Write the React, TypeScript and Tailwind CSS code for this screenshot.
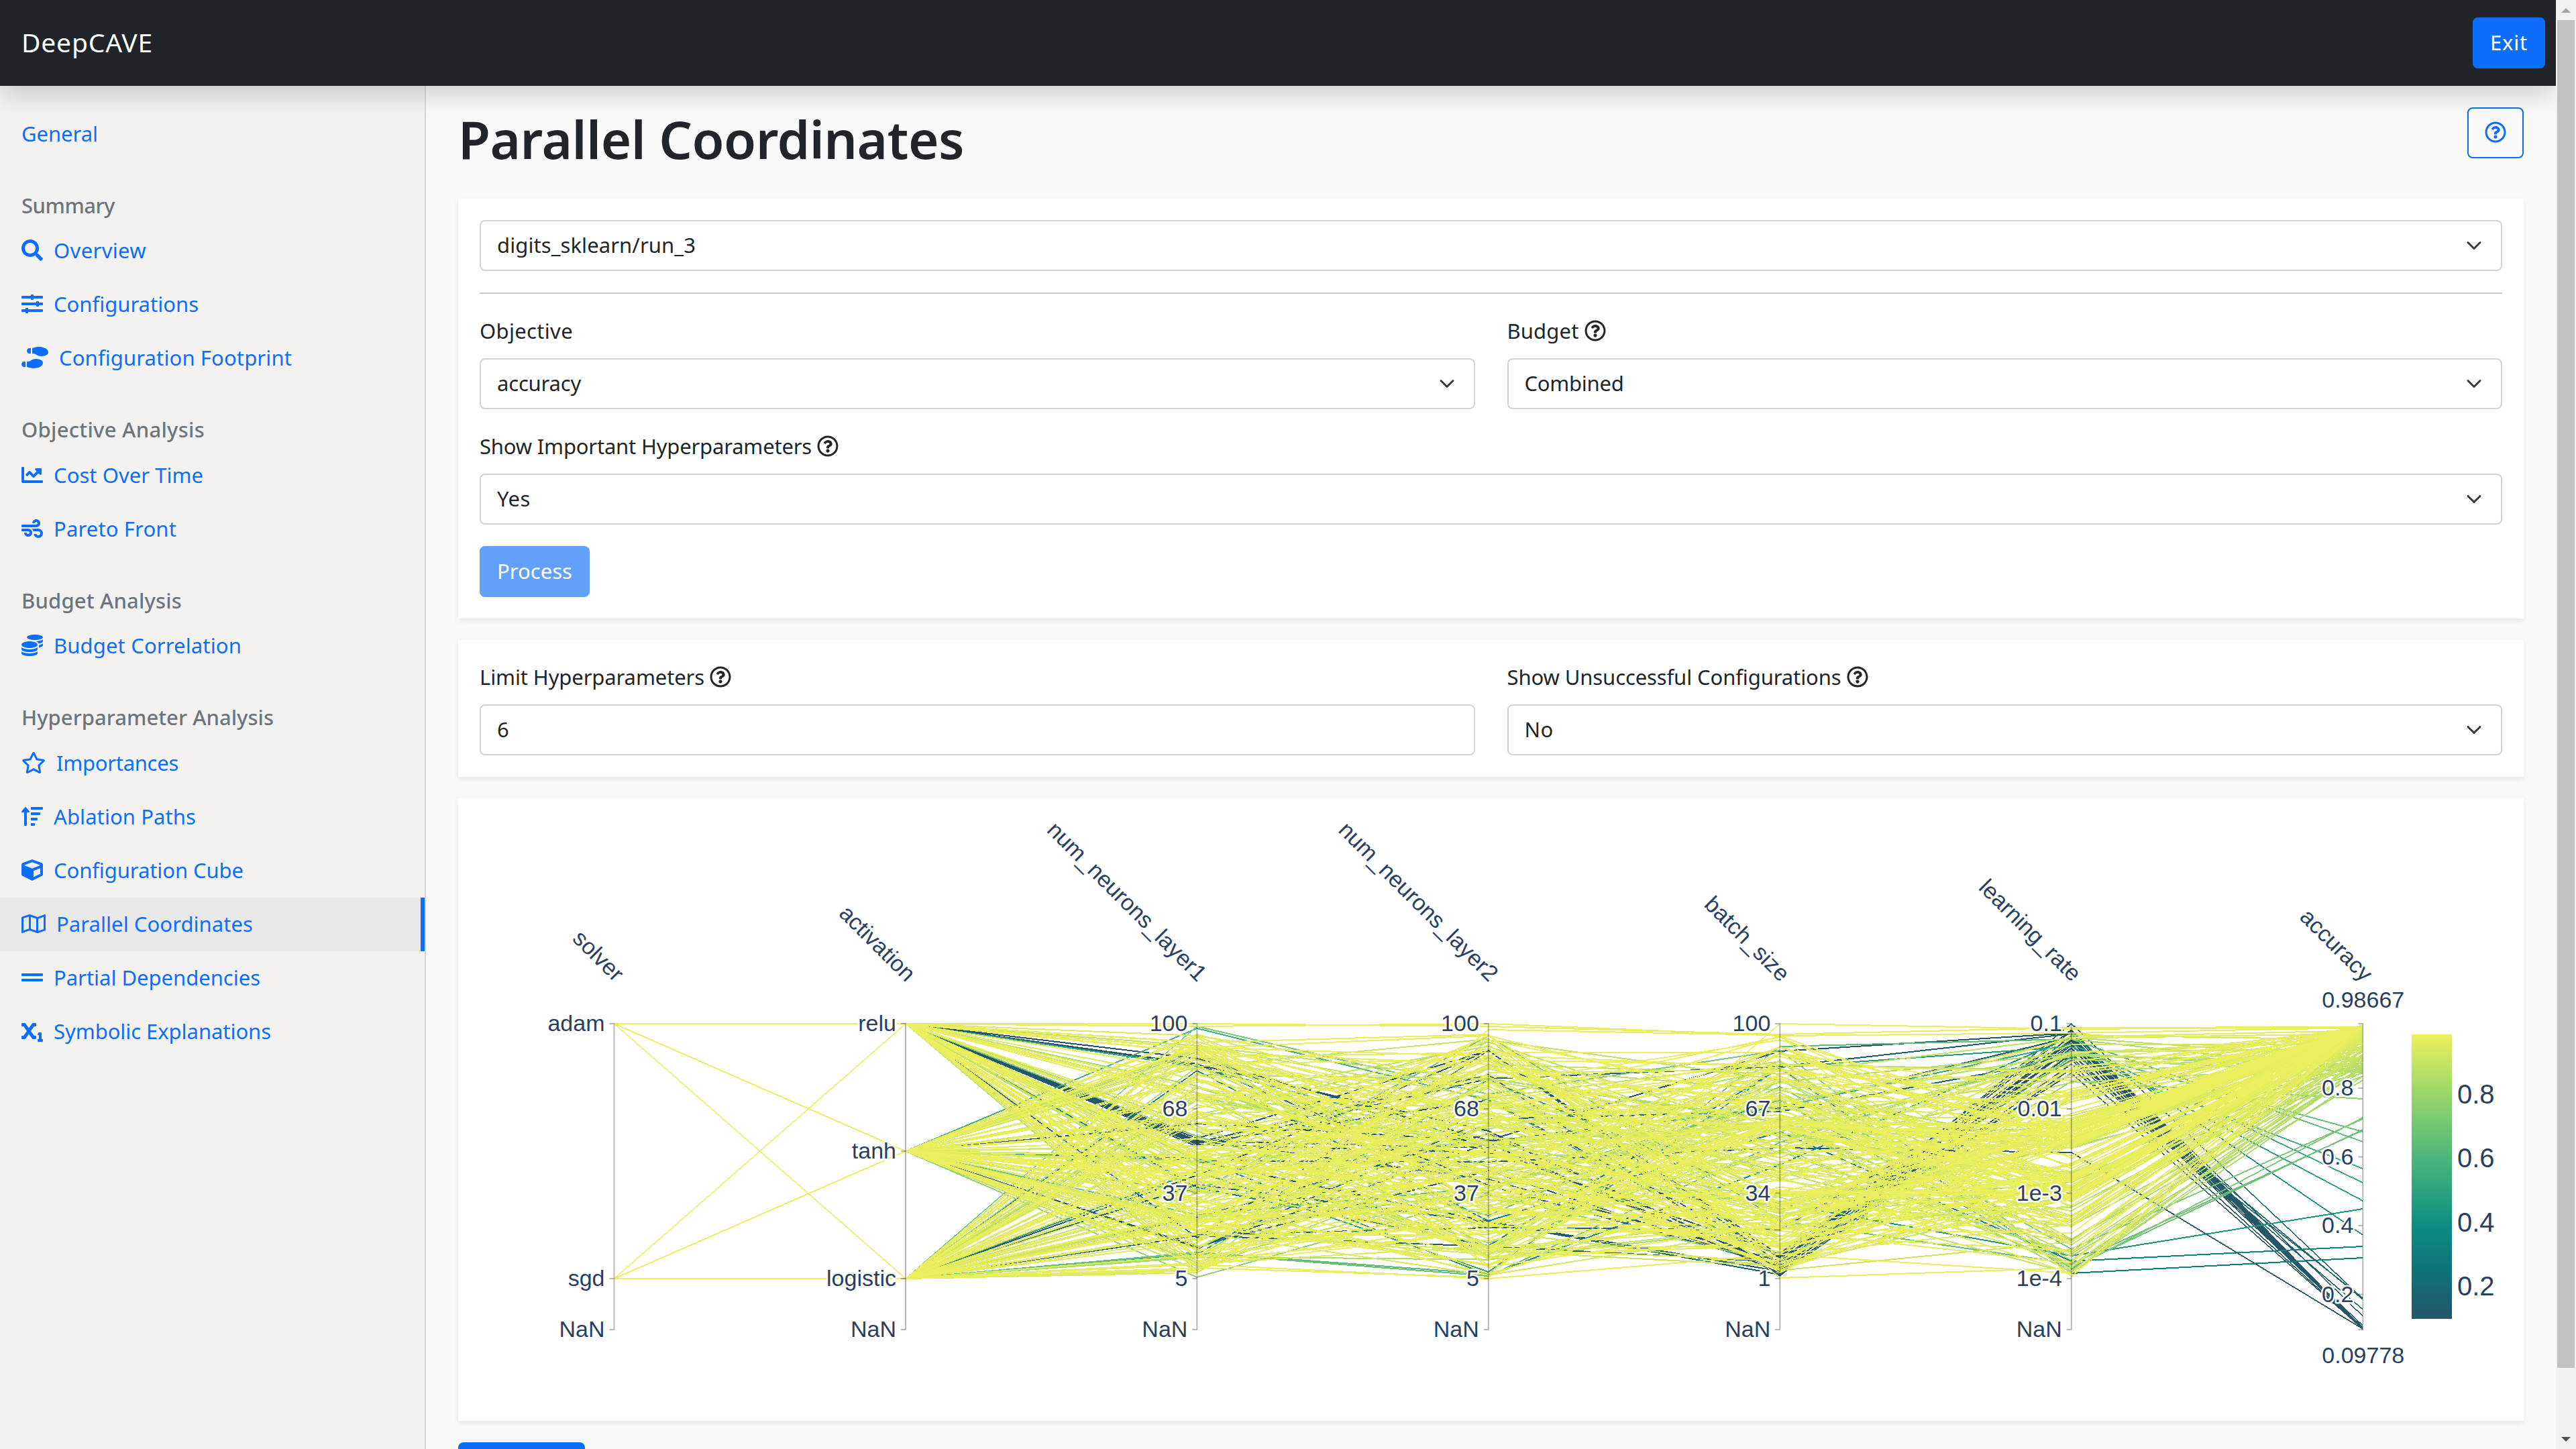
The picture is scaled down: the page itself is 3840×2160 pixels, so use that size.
import { useLayoutEffect, useRef } from "react";
import type { ReactNode } from "react";
import type { IconType } from "react-icons";
import {
  FaChartLine,
  FaCoins,
  FaCube,
  FaGripLines,
  FaRegMap,
  FaRegQuestionCircle,
  FaRegStar,
  FaSearch,
  FaShoePrints,
  FaSlidersH,
  FaSortAmountUp,
  FaSubscript,
  FaWind,
} from "react-icons/fa";

/** Single-line text whose tracking is tuned so that it occupies a given width. */
function FitText({ children, width, className = "" }: { children: string; width: number; className?: string }) {
  const ref = useRef<HTMLSpanElement>(null);
  useLayoutEffect(() => {
    const el = ref.current;
    if (!el) return;
    el.style.letterSpacing = "0px";
    const natural = el.getBoundingClientRect().width;
    el.style.letterSpacing = `${(width - natural) / children.length}px`;
  }, [children, width]);
  return (
    <span ref={ref} className={`inline-block -translate-y-px whitespace-nowrap ${className}`}>
      {children}
    </span>
  );
}

/* ---------- sidebar ---------- */

type NavItem = { label: string; width: number; icon?: IconType; wide?: string; active?: boolean };
type NavGroup = { title?: string; width?: number; items: NavItem[] };

const NAV: NavGroup[] = [
  { items: [{ label: "General", width: 114 }] },
  {
    title: "Summary",
    width: 139,
    items: [
      { label: "Overview", width: 138, icon: FaSearch },
      { label: "Configurations", width: 216, icon: FaSlidersH },
      { label: "Configuration Footprint", width: 347, icon: FaShoePrints, wide: "w-10" },
    ],
  },
  {
    title: "Objective Analysis",
    width: 273,
    items: [
      { label: "Cost Over Time", width: 223, icon: FaChartLine },
      { label: "Pareto Front", width: 183, icon: FaWind },
    ],
  },
  {
    title: "Budget Analysis",
    width: 239,
    items: [{ label: "Budget Correlation", width: 280, icon: FaCoins }],
  },
  {
    title: "Hyperparameter Analysis",
    width: 376,
    items: [
      { label: "Importances", width: 182, icon: FaRegStar, wide: "w-9" },
      { label: "Ablation Paths", width: 212, icon: FaSortAmountUp },
      { label: "Configuration Cube", width: 283, icon: FaCube },
      { label: "Parallel Coordinates", width: 293, icon: FaRegMap, wide: "w-9", active: true },
      { label: "Partial Dependencies", width: 308, icon: FaGripLines },
      { label: "Symbolic Explanations", width: 324, icon: FaSubscript },
    ],
  },
];

function Sidebar() {
  return (
    <aside className="w-[635px] shrink-0 border-r-2 border-[#d9d8d7] bg-[#f3f2f0] pt-8">
      {NAV.map((group) => (
        <div key={group.items[0].label}>
          {group.title && (
            <h6 className="mt-12 mb-2 h-[38.4px] px-8 leading-[38.4px] font-medium text-[#6c757d]">
              <FitText width={group.width ?? 0}>{group.title}</FitText>
            </h6>
          )}
          {group.items.map(({ label, width, icon: Icon, wide, active }) => (
            <a
              key={label}
              className={`flex h-20 items-center gap-4 pl-8 leading-[48px] text-[#0d6efd] ${
                active ? "border-r-[6px] border-[#0d6efd] bg-[#e8e8e8]" : ""
              }`}
            >
              {Icon && <Icon className={`h-8 shrink-0 -translate-y-px ${wide ?? "w-8"}`} />}
              <FitText width={width}>{label}</FitText>
            </a>
          ))}
        </div>
      ))}
    </aside>
  );
}

/* ---------- form parts ---------- */

function Card({ children, className = "" }: { children: ReactNode; className?: string }) {
  return <section className={`bg-white shadow-[0_4px_8px_rgba(0,0,0,0.075)] ${className}`}>{children}</section>;
}

function Control({ value, width, select = true }: { value: string; width: number; select?: boolean }) {
  return (
    <div className="flex h-[76px] items-center justify-between rounded-lg border-2 border-[#ced4da] bg-white pr-7 pl-6 leading-[48px]">
      <FitText width={width}>{value}</FitText>
      {select && (
        <svg className="size-6" viewBox="0 0 16 16" fill="none" stroke="#343a40" strokeWidth="2" strokeLinecap="round" strokeLinejoin="round">
          <path d="m2 5 6 6 6-6" />
        </svg>
      )}
    </div>
  );
}

function Label({ text, width, help = true }: { text: string; width: number; help?: boolean }) {
  return (
    <div className="mb-4 flex h-12 items-center gap-2 leading-[48px]">
      <FitText width={width}>{text}</FitText>
      {help && <FaRegQuestionCircle className="size-8 -translate-y-px" />}
    </div>
  );
}

/* ---------- parallel coordinates plot ---------- */

const AXES = [915.5, 1350, 1784.4, 2218.8, 2653.3, 3087.8, 3522.3];
const TOP = 1526;
const BOTTOM = 1906;
const NAN_Y = 1982;
const RELU = 1526;
const TANH = 1716;
const LOGISTIC = 1906;

const STOPS: [number, number, number][] = [
  [36, 86, 104],
  [15, 114, 121],
  [13, 143, 129],
  [57, 171, 126],
  [110, 197, 116],
  [169, 220, 103],
  [237, 239, 93],
];

function colorAt(accY: number): string {
  const t = Math.min(1, Math.max(0, (NAN_Y - accY) / (NAN_Y - TOP)));
  const p = t * (STOPS.length - 1);
  const i = Math.min(STOPS.length - 2, Math.floor(p));
  const f = p - i;
  const c = STOPS[i].map((v, k) => Math.round(v + (STOPS[i + 1][k] - v) * f));
  return `rgb(${c[0]},${c[1]},${c[2]})`;
}

// Runs with low accuracy: activation, layer1, layer2, batch size, learning rate, accuracy
const LOW_RUNS: number[][] = [
  [RELU, 1578, 1700, 1567, 1540, 1981],
  [RELU, 1586, 1767, 1887, 1544, 1981],
  [RELU, 1587, 1686, 1893, 1548, 1980],
  [RELU, 1697, 1566, 1872, 1535, 1981],
  [RELU, 1700, 1758, 1880, 1552, 1981],
  [RELU, 1703, 1602, 1902, 1558, 1979],
  [RELU, 1706, 1718, 1868, 1563, 1981],
  [RELU, 1709, 1608, 1590, 1541, 1962],
  [RELU, 1845, 1566, 1884, 1526, 1936],
  [TANH, 1675, 1701, 1651, 1546, 1981],
  [TANH, 1730, 1732, 1711, 1718, 1981],
  [TANH, 1731, 1821, 1895, 1571, 1980],
  [TANH, 1860, 1704, 1898, 1586, 1981],
  [TANH, 1862, 1668, 1657, 1577, 1937],
  [LOGISTIC, 1841, 1830, 1833, 1580, 1952],
  [LOGISTIC, 1842, 1858, 1881, 1537, 1981],
  [LOGISTIC, 1752, 1566, 1876, 1600, 1981],
  [LOGISTIC, 1815, 1690, 1890, 1570, 1976],
  [LOGISTIC, 1766, 1822, 1900, 1593, 1935],
  [RELU, 1704, 1640, 1874, 1556, 1981],
  [RELU, 1701, 1711, 1886, 1550, 1981],
  [TANH, 1858, 1745, 1891, 1562, 1981],
  [RELU, 1770, 1857, 1592, 1898, 1875],
  [LOGISTIC, 1596, 1820, 1687, 1880, 1858],
  [LOGISTIC, 1870, 1610, 1794, 1872, 1802],
  [TANH, 1726, 1901, 1736, 1545, 1841],
  [LOGISTIC, 1746, 1896, 1591, 1560, 1790],
  [RELU, 1590, 1704, 1650, 1556, 1763],
  [TANH, 1533, 1640, 1884, 1575, 1742],
  [LOGISTIC, 1867, 1899, 1560, 1549, 1702],
  [LOGISTIC, 1868, 1902, 1703, 1567, 1687],
  [TANH, 1811, 1770, 1640, 1890, 1684],
  [TANH, 1777, 1544, 1820, 1884, 1685],
  [LOGISTIC, 1530, 1631, 1566, 1892, 1666],
  [RELU, 1694, 1812, 1620, 1862, 1668],
  [TANH, 1904, 1781, 1883, 1612, 1638],
];

function makeRuns(): number[][] {
  let seed = 20240;
  const rnd = () => {
    seed = (seed * 1664525 + 1013904223) % 4294967296;
    return seed / 4294967296;
  };
  const runs: number[][] = LOW_RUNS.map((r, i) => [i % 2 ? BOTTOM : TOP, ...r]);
  const acts = [RELU, TANH, LOGISTIC];
  for (let i = 0; i < 215; i++) {
    const act = acts[i % 3];
    let l1 = TOP + 14 + rnd() * (BOTTOM - TOP - 22);
    // Keeps the gaps of the relu fan open around the failed runs.
    while (act === RELU && ((l1 > 1688 && l1 < 1716) || (l1 > 1572 && l1 < 1594) || (l1 > 1838 && l1 < 1850))) {
      l1 = TOP + 14 + rnd() * (BOTTOM - TOP - 22);
    }
    const l2 = TOP + 16 + rnd() * (BOTTOM - TOP - 20);
    const batch = TOP + 18 + rnd() * (BOTTOM - TOP - 26);
    const pick = rnd();
    let lr: number;
    if (pick < 0.2) lr = 1670 + rnd() * 42;
    else if (pick < 0.36) lr = 1756 + rnd() * 34;
    else if (pick < 0.45) lr = 1540 + rnd() * 60;
    else lr = 1592 + rnd() * 310;
    let acc = 1528 + Math.pow(rnd(), 1.8) * 26;
    if (lr < 1600 || lr > 1840) acc = 1531 + Math.pow(rnd(), 1.5) * 80;
    else if (rnd() < 0.15) acc = 1545 + rnd() * 72;
    runs.push([i % 2 ? TOP : BOTTOM, act, l1, l2, batch, lr, acc]);
  }
  runs.push([TOP, RELU, 1526, 1530, 1542, 1532, 1531]);
  runs.push([TOP, RELU, 1530, 1526, 1544, 1540, 1532]);
  runs.push([BOTTOM, LOGISTIC, 1890, 1904, 1526, 1534, 1531]);
  runs.push([BOTTOM, LOGISTIC, 1885, 1535, 1543, 1903, 1532]);
  runs.push([TOP, LOGISTIC, 1576, 1569, 1569, 1700, 1531]);
  runs.push([BOTTOM, RELU, 1554, 1542, 1905, 1890, 1531]);
  runs.push([BOTTOM, TANH, 1885, 1906, 1870, 1898, 1532]);
  return runs.sort((a, b) => b[6] - a[6]);
}

const RUNS = makeRuns();

/** One run as a ribbon of constant vertical thickness, so steep parts come out thinner. */
function ribbon(run: number[]): string {
  const half = 1;
  const upper = run.map((y, k) => `${AXES[k]} ${(y - half).toFixed(1)}`);
  const lower = run.map((y, k) => `${AXES[k]} ${(y + half).toFixed(1)}`).reverse();
  return `M${upper.join("L")}L${lower.join("L")}Z`;
}

const TITLES = ["solver", "activation", "num_neurons_layer1", "num_neurons_layer2", "batch_size", "learning_rate", "accuracy"];

const NUM_Y = [1526, 1653, 1778.5, 1906];
const TICKS: [string, number][][] = [
  [["adam", TOP], ["sgd", BOTTOM]],
  [["relu", RELU], ["tanh", TANH], ["logistic", LOGISTIC]],
  [["100", NUM_Y[0]], ["68", NUM_Y[1]], ["37", NUM_Y[2]], ["5", NUM_Y[3]]],
  [["100", NUM_Y[0]], ["68", NUM_Y[1]], ["37", NUM_Y[2]], ["5", NUM_Y[3]]],
  [["100", NUM_Y[0]], ["67", NUM_Y[1]], ["34", NUM_Y[2]], ["1", NUM_Y[3]]],
  [["0.1", NUM_Y[0]], ["0.01", NUM_Y[1]], ["1e-3", NUM_Y[2]], ["1e-4", NUM_Y[3]]],
  [["0.8", 1622], ["0.6", 1724.5], ["0.4", 1827], ["0.2", 1929.5]],
];

function ParallelPlot() {
  return (
    <svg className="block h-[928px] w-[3079px] font-['Liberation_Sans',Arial,sans-serif] text-[34px]" viewBox="683 1190 3079 928" fill="#2a3f5f">
      <defs>
        <linearGradient id="scale" x1="0" y1="1" x2="0" y2="0">
          {STOPS.map((c, i) => (
            <stop key={i} offset={i / 6} stopColor={`rgb(${c[0]},${c[1]},${c[2]})`} />
          ))}
        </linearGradient>
      </defs>

      <g shapeRendering="crispEdges">
        {RUNS.map((run, i) => (
          <path key={i} fill={colorAt(run[6])} d={ribbon(run)} />
        ))}
      </g>

      {AXES.map((x, i) => {
        const ticks = i < 6 ? [...TICKS[i], ["NaN", NAN_Y] as [string, number]] : TICKS[i];
        return (
          <g key={x}>
            <path d={`M${x - 7} ${TOP}H${x}V${NAN_Y}H${x - 7}`} fill="none" stroke="#000" strokeOpacity="0.28" strokeWidth="2" />
            {ticks.map(([text, y]) => (
              <g key={text}>
                {y !== TOP && y !== NAN_Y && (
                  <path d={`M${x - 7} ${y}H${x}`} stroke="#000" strokeOpacity="0.28" strokeWidth="2" />
                )}
                <text x={x - 14} y={y + 11} textAnchor="end" stroke="#fff" strokeWidth="5" strokeLinejoin="round" paintOrder="stroke">
                  {text}
                </text>
              </g>
            ))}
            <text textAnchor="end" transform={`translate(${x + 0.5} 1465) rotate(45)`}>
              {TITLES[i]}
            </text>
          </g>
        );
      })}

      <text x={AXES[6] + 0.5} y="1502" textAnchor="middle">0.98667</text>
      <text x={AXES[6] + 0.5} y="2032" textAnchor="middle">0.09778</text>

      <rect x="3595" y="1542" width="60" height="424" fill="url(#scale)" />
      <g fontSize="40">
        <text x="3663" y="1645">0.8</text>
        <text x="3663" y="1740">0.6</text>
        <text x="3663" y="1836">0.4</text>
        <text x="3663" y="1931">0.2</text>
      </g>
    </svg>
  );
}

/* ---------- page ---------- */

function Scrollbar() {
  return (
    <div className="flex h-full w-[30px] shrink-0 flex-col items-center bg-[#f1f1f1]">
      <div className="flex h-[30px] items-center justify-center">
        <svg className="h-[7px] w-[14px]" viewBox="0 0 14 7" fill="#a3a3a3">
          <path d="M0 7 7 0l7 7z" />
        </svg>
      </div>
      <div className="h-[2009px] w-[26px] bg-[#c1c1c1]" />
      <div className="mt-auto flex h-[30px] items-center justify-center">
        <svg className="h-[7px] w-[14px]" viewBox="0 0 14 7" fill="#505050">
          <path d="M0 0h14L7 7z" />
        </svg>
      </div>
    </div>
  );
}

export default function App() {
  return (
    <div className="flex h-[2160px] w-[3840px] overflow-hidden bg-[#f9f9f9] font-['Noto_Sans','Open_Sans',sans-serif] text-[31px] text-[#212529]">
      <div className="flex w-[3810px] flex-col overflow-hidden">
        <header className="relative z-10 flex h-32 shrink-0 items-center justify-between bg-[#212529] pr-4 pl-8 text-white shadow-[0_16px_32px_rgba(0,0,0,0.15)]">
          <FitText width={196} className="text-[39px]">
            DeepCAVE
          </FitText>
          <button className="h-[76px] w-[108px] rounded-lg bg-[#0d6efd] pl-[26px] text-left leading-[48px]">
            <FitText width={56}>Exit</FitText>
          </button>
        </header>

        <div className="flex min-h-0 flex-1">
          <Sidebar />

          <main className="flex w-[3175px] flex-col gap-8 px-12 pt-8">
            <div className="flex h-[104px] shrink-0 items-start justify-between">
              <h1 className="text-[78px] leading-[96px] font-semibold">
                <FitText width={754}>Parallel Coordinates</FitText>
              </h1>
              <button className="flex h-[76px] w-[84px] items-center justify-center rounded-lg border-2 border-[#0d6efd] text-[#0d6efd]">
                <FaRegQuestionCircle className="size-8 -translate-y-px" />
              </button>
            </div>

            <Card className="shrink-0 p-8">
              <Control value="digits_sklearn/run_3" width={296} />
              <hr className="my-8 h-0.5 border-0 bg-[#c7c8c9]" />
              <div className="grid grid-cols-2 gap-x-12 gap-y-8">
                <div>
                  <Label text="Objective" width={139} help={false} />
                  <Control value="accuracy" width={125} />
                </div>
                <div>
                  <Label text="Budget" width={107} />
                  <Control value="Combined" width={148} />
                </div>
                <div className="col-span-2">
                  <Label text="Show Important Hyperparameters" width={495} />
                  <Control value="Yes" width={50} />
                </div>
              </div>
              <button className="mt-8 block h-[76px] w-[164px] rounded-lg bg-[#62a0fe] pl-[26px] text-left leading-[48px] text-white">
                <FitText width={112}>Process</FitText>
              </button>
            </Card>

            <Card className="grid shrink-0 grid-cols-2 gap-x-12 p-8">
              <div>
                <Label text="Limit Hyperparameters" width={335} />
                <Control value="6" width={18} select={false} />
              </div>
              <div>
                <Label text="Show Unsuccessful Configurations" width={498} />
                <Control value="No" width={43} />
              </div>
            </Card>

            <Card className="h-[928px] shrink-0">
              <ParallelPlot />
            </Card>

            <div className="h-[76px] w-[189px] shrink-0 rounded-lg bg-[#0d6efd]" />
          </main>
        </div>
      </div>
      <Scrollbar />
    </div>
  );
}
